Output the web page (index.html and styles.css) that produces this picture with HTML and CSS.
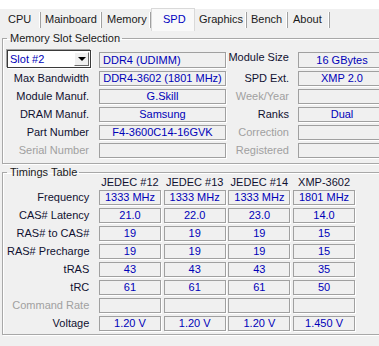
FILE: index.html
```html
<!DOCTYPE html>
<html lang="en">
<head>
    <meta charset="UTF-8">
    <title>CPU-Z SPD</title>
    <link rel="stylesheet" href="styles.css">
</head>
<body>
<div class="topstrip"></div>
<div class="tabs">
    <span class="tab t-cpu">CPU</span>
    <span class="tab t-mb">Mainboard</span>
    <span class="tab t-mem">Memory</span>
    <span class="tab t-spd active">SPD</span>
    <span class="tab t-gfx">Graphics</span>
    <span class="tab t-bench">Bench</span>
    <span class="tab t-about">About</span>
</div>

<fieldset class="group">
    <legend>Memory Slot Selection</legend>
    <div class="slot-grid">
        <div class="select"><span class="select-text">Slot #2</span><span class="select-btn"><span class="tri"></span></span></div>
        <div class="field left first">DDR4 (UDIMM)</div>
        <div class="label">Module Size</div>
        <div class="field first">16 GBytes</div>

        <div class="label">Max Bandwidth</div>
        <div class="field">DDR4-3602 (1801 MHz)</div>
        <div class="label">SPD Ext.</div>
        <div class="field">XMP 2.0</div>

        <div class="label">Module Manuf.</div>
        <div class="field">G.Skill</div>
        <div class="label off">Week/Year</div>
        <div class="field"></div>

        <div class="label">DRAM Manuf.</div>
        <div class="field">Samsung</div>
        <div class="label">Ranks</div>
        <div class="field">Dual</div>

        <div class="label">Part Number</div>
        <div class="field">F4-3600C14-16GVK</div>
        <div class="label off">Correction</div>
        <div class="field"></div>

        <div class="label off">Serial Number</div>
        <div class="field"></div>
        <div class="label off">Registered</div>
        <div class="field"></div>
    </div>
</fieldset>

<fieldset class="group timings">
    <legend>Timings Table</legend>
    <div class="timing-grid">
        <div></div>
        <div class="head">JEDEC #12</div>
        <div class="head">JEDEC #13</div>
        <div class="head">JEDEC #14</div>
        <div class="head">XMP-3602</div>

        <div class="label">Frequency</div>
        <div class="field">1333 MHz</div>
        <div class="field">1333 MHz</div>
        <div class="field">1333 MHz</div>
        <div class="field">1801 MHz</div>

        <div class="label">CAS# Latency</div>
        <div class="field">21.0</div>
        <div class="field">22.0</div>
        <div class="field">23.0</div>
        <div class="field">14.0</div>

        <div class="label">RAS# to CAS#</div>
        <div class="field">19</div>
        <div class="field">19</div>
        <div class="field">19</div>
        <div class="field">15</div>

        <div class="label">RAS# Precharge</div>
        <div class="field">19</div>
        <div class="field">19</div>
        <div class="field">19</div>
        <div class="field">15</div>

        <div class="label">tRAS</div>
        <div class="field">43</div>
        <div class="field">43</div>
        <div class="field">43</div>
        <div class="field">35</div>

        <div class="label">tRC</div>
        <div class="field">61</div>
        <div class="field">61</div>
        <div class="field">61</div>
        <div class="field">50</div>

        <div class="label off">Command Rate</div>
        <div class="field"></div>
        <div class="field"></div>
        <div class="field"></div>
        <div class="field"></div>

        <div class="label">Voltage</div>
        <div class="field">1.20 V</div>
        <div class="field">1.20 V</div>
        <div class="field">1.20 V</div>
        <div class="field">1.450 V</div>
    </div>
</fieldset>
</body>
</html>
```

FILE: styles.css
```css
html {
    overflow: hidden;
}
body {
    margin: 0;
    width: 392px;
    height: 346px;
    background: #f0f0f0;
    font-family: 'Liberation Sans', Arial, sans-serif;
    font-size: 11px;
    color: #000;
}
.topstrip {
    height: 9px;
    background: #fff;
}

/* tab strip */
.tabs {
    display: flex;
    height: 21px;
    padding-left: 2px;
}
.tab {
    position: relative;
    box-sizing: border-box;
    padding-left: 5px;
    line-height: 21px;
    white-space: nowrap;
    color: #1a1a1a;
}
.tab::after {
    content: "";
    position: absolute;
    right: 0;
    top: 3px;
    height: 16px;
    width: 1px;
    background: #a0a0a0;
    box-shadow: -1px 0 0 #fff;
}
.t-cpu { width: 39px; padding-left: 6px; }
.t-mb { width: 61px; padding-left: 4px; }
.t-mem { width: 49px; }
.t-spd { width: 44px; }
.t-gfx { width: 52px; padding-left: 4px; }
.t-bench { width: 41px; padding-left: 4px; }
.t-about { width: 42px; }
.tab.active {
    margin-top: -1px;
    height: 23px;
    padding-left: 11px;
    background: #f9f9f9;
    border: 1px solid #d9d9d9;
    border-bottom: none;
    color: #0000c0;
}
.tab.active::after {
    display: none;
}

/* group boxes */
.group {
    margin: 1px 0 0 2px;
    padding: 5px 4px 5px;
    border: 1px solid #a8a8a8;
    box-shadow: 1px 1px 0 #fff, inset 1px 1px 0 #fff;
    min-width: 0;
}
.group legend {
    padding: 0 2px 0 3px;
    line-height: 14px;
    color: #1a1a1a;
}
.timings {
    margin-top: 2px;
    padding: 0 4px 3px;
}
.timings legend {
    line-height: 13px;
}

.label {
    text-align: right;
    white-space: nowrap;
    line-height: 15px;
    color: #101030;
}
.label.off {
    color: #a0a0a0;
}
.field {
    box-sizing: border-box;
    height: 15px;
    line-height: 13px;
    border: 1px solid #a0a0a0;
    box-shadow: 1px 1px 0 #fff;
    color: #0000b8;
    text-align: center;
    white-space: nowrap;
    overflow: hidden;
}
.field.left {
    text-align: left;
    padding-left: 3px;
}

/* memory slot section */
.slot-grid {
    display: grid;
    grid-template-columns: 92px 127px 72px 88px;
    row-gap: 3px;
}
.slot-grid .label:nth-child(4n+1) {
    padding-right: 10px;
}
.slot-grid .label:nth-child(4n+3) {
    padding-right: 9px;
}
.field.first {
    height: 16px;
    align-self: end;
    line-height: 14px;
}
.select {
    box-sizing: border-box;
    width: 84px;
    height: 18px;
    display: flex;
    background: #fff;
    border: 1px solid #3a3a3a;
    box-shadow: -1px -1px 0 #a0a0a0, 1px 1px 0 #fff;
}
.select-text {
    flex: 1;
    padding-left: 2px;
    line-height: 16px;
    color: #0000b8;
}
.select-btn {
    box-sizing: border-box;
    width: 15px;
    margin: 1px;
    background: #f0f0f0;
    border: 1px solid;
    border-color: #fff #696969 #696969 #fff;
    display: flex;
    align-items: center;
    justify-content: center;
}
.tri {
    width: 0;
    height: 0;
    border-left: 4px solid transparent;
    border-right: 4px solid transparent;
    border-top: 4px solid #000;
}

/* timings */
.timing-grid {
    display: grid;
    margin-top: -2px;
    grid-template-columns: 89.3px repeat(4, 62px);
    grid-template-rows: 10px;
    grid-auto-rows: 15px;
    column-gap: 2.7px;
    row-gap: 3px;
}
.timing-grid .label {
    padding-right: 7px;
}
.head {
    line-height: 10px;
    text-align: center;
    white-space: nowrap;
    color: #101030;
}
```
